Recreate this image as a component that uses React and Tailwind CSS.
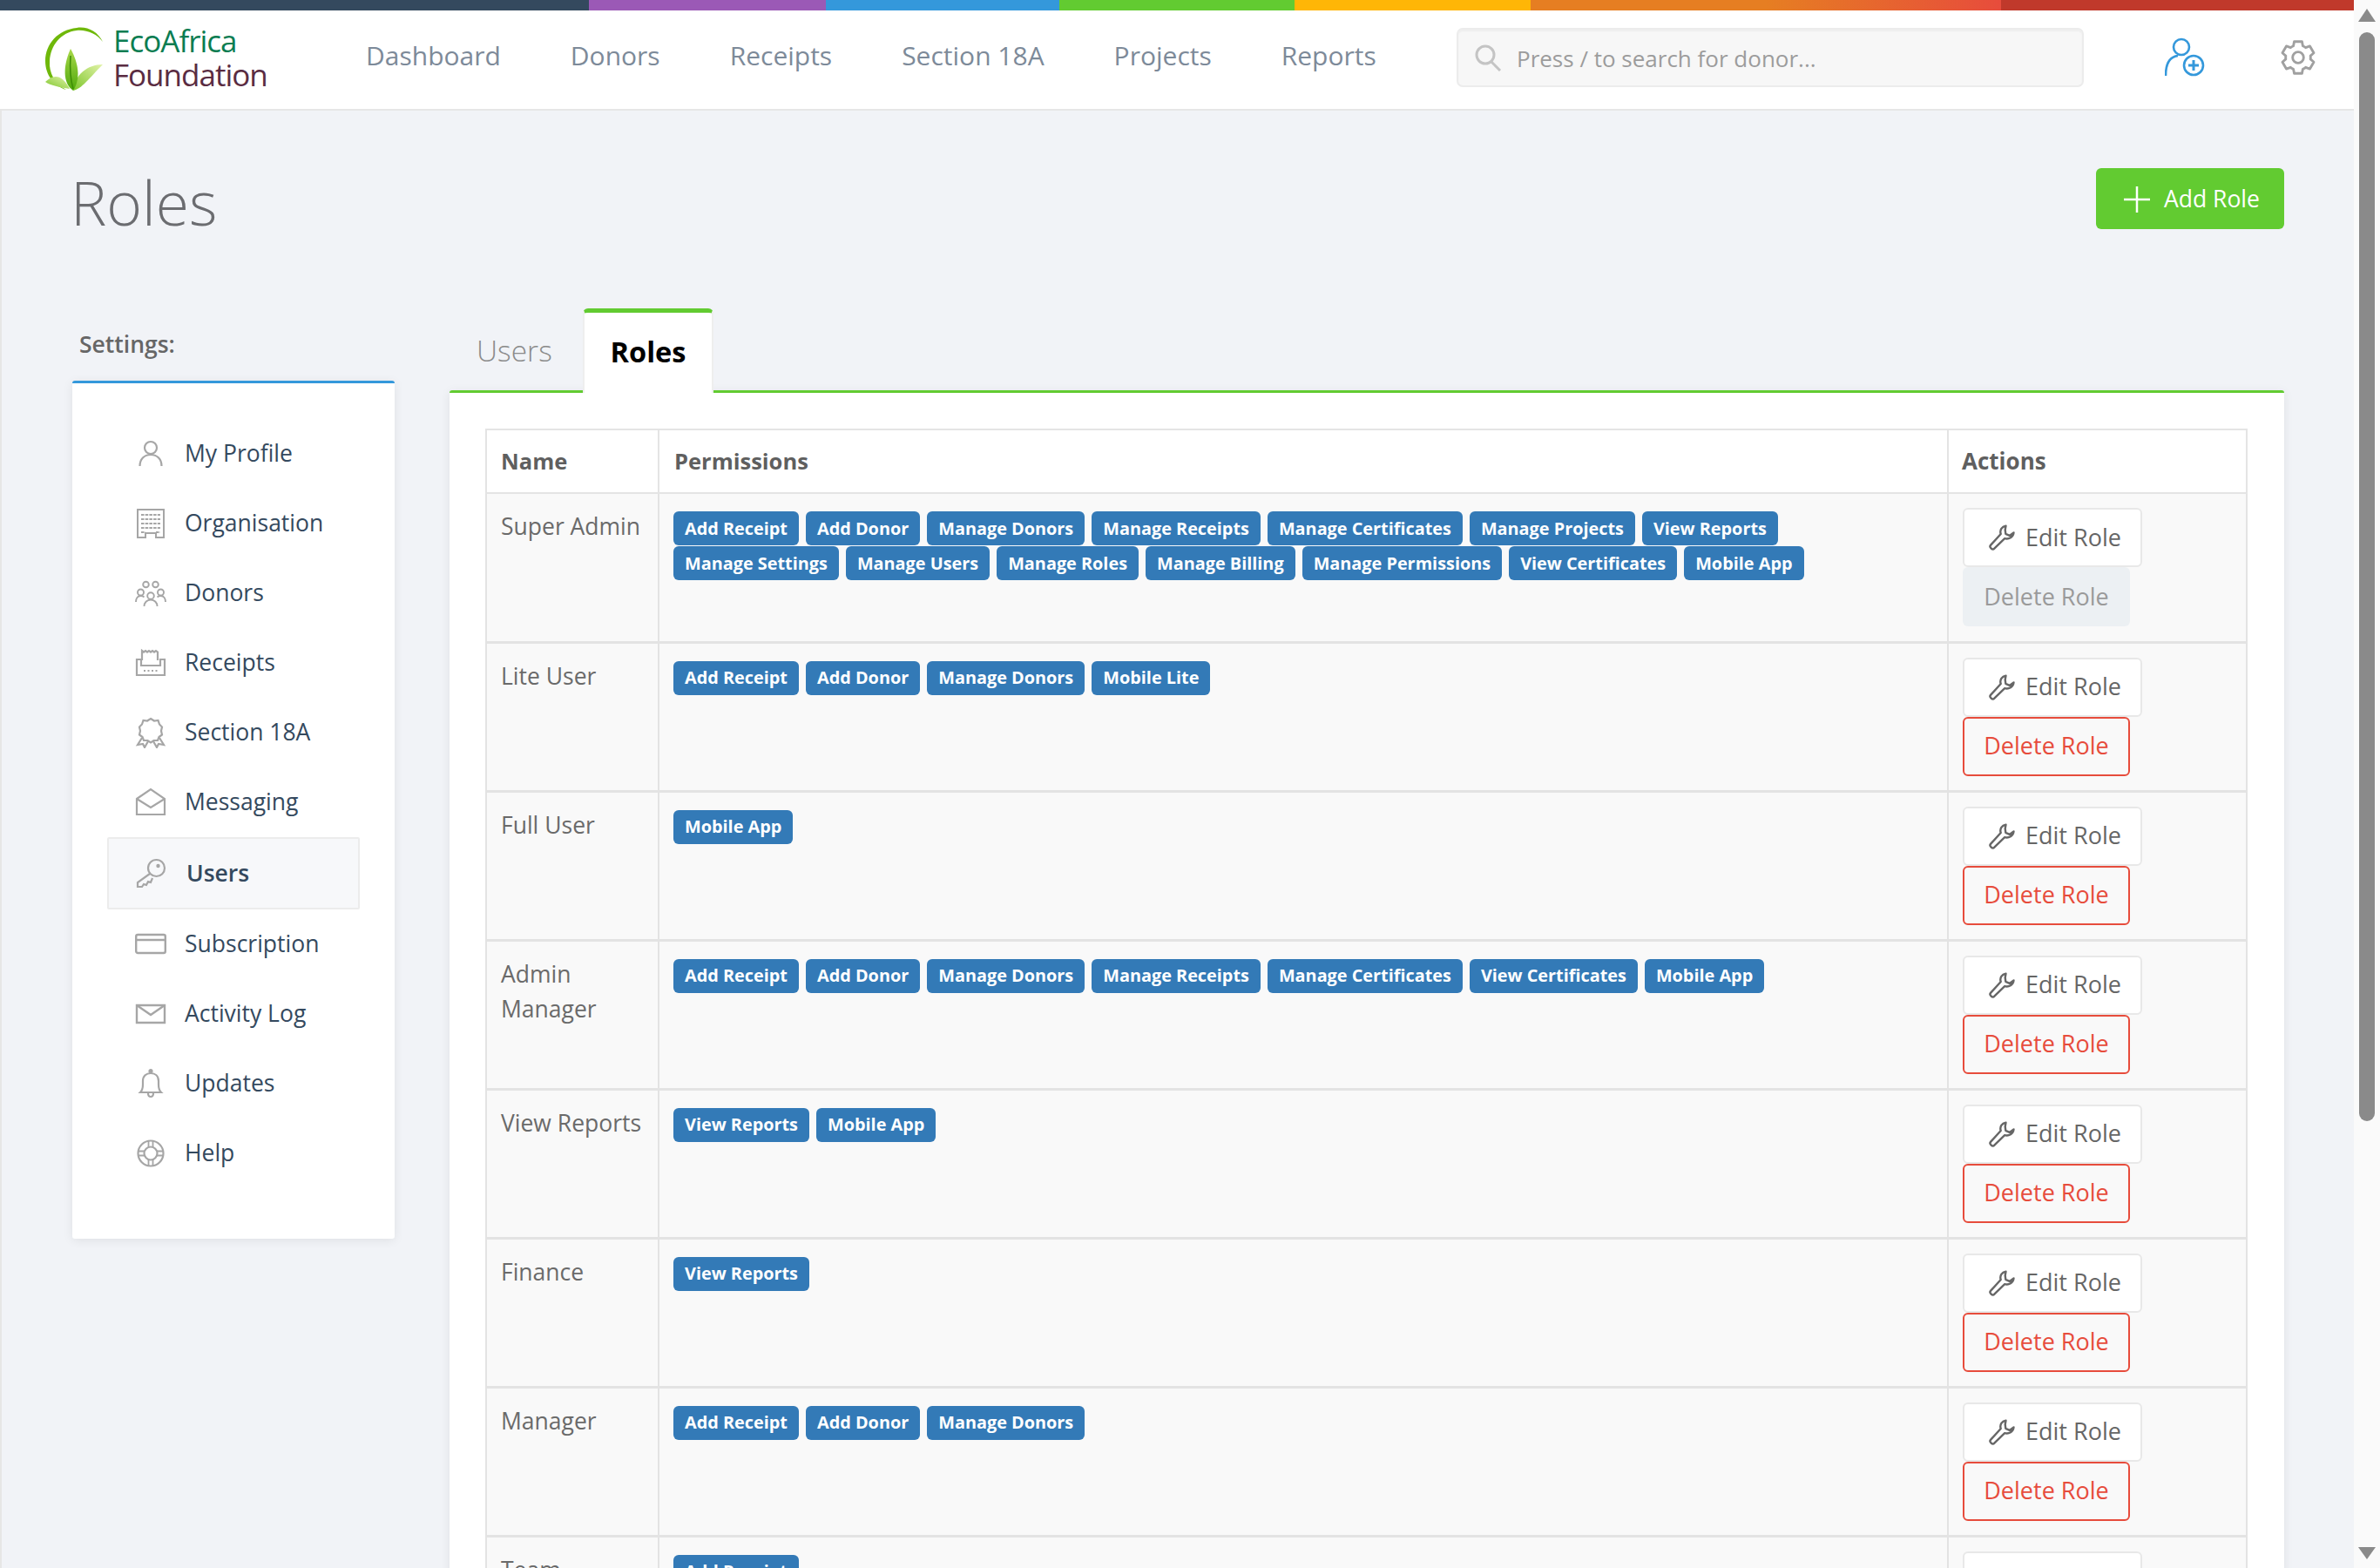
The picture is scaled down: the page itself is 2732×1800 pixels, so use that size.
import React from "react";

const FONT = "font-['Open_Sans','Noto_Sans',sans-serif]";

function I({ children, sw = 2 }) {
  return (
    <svg viewBox="0 0 36 36" className="w-9 h-9 shrink-0" fill="none" stroke="#a6a6a6" strokeWidth={sw} strokeLinejoin="miter">
      {children}
    </svg>
  );
}

const icons = {
  profile: (
    <I sw={2.2}>
      <circle cx="18" cy="11" r="7" />
      <path d="M5.500 32c0-8 5-13 12.500-13s12.500 5 12.500 13" />
    </I>
  ),
  org: (
    <I>
      <path d="M3 34V2h30v32h-9v-5H12v5z" />
      <path d="M7 8h22M7 13h22M7 18h22M7 23h22M7 28h5M24 28h5" strokeDasharray="3.500 1.200" strokeWidth="1.800" />
    </I>
  ),
  donors: (
    <I sw={1.9}>
      <circle cx="12.500" cy="8" r="3.300" />
      <circle cx="23.500" cy="8" r="3.300" />
      <circle cx="6.500" cy="17" r="3.500" />
      <circle cx="29.500" cy="17" r="3.500" />
      <circle cx="18" cy="21" r="3.800" />
      <path d="M1 28c0-4 2-7 5.500-7 1.500 0 3 .5 4 1.500M35 28c0-4-2-7-5.500-7-1.500 0-3 .5-4 1.500M10.500 33c0-4 3-7.500 7.500-7.500s7.500 3.500 7.500 7.500" />
    </I>
  ),
  receipts: (
    <I sw={2.2}>
      <path d="M8 15V4l2 1.500 2-1.500 2 1.500 2-1.500 2 1.500 2-1.500 2 1.500 2-1.500 2 1.500V15" />
      <path d="M2 14h5v7h22v-7h5v18H2z" />
      <path d="M10 27h16" strokeDasharray="2 2.500" />
    </I>
  ),
  award: (
    <I sw={2.2}>
      <path d="M18 2l4 2.500 4.500-.5 1.500 4.500 3 3-1 4.500 1 4.500-3.500 2.500-1.500 4-4.500 0-3.500 2.500-3.500-2.500-4.500 0-1.500-4-3.500-2.500 1-4.500-1-4.500 3-3L9.500 4l4.500.5z" />
      <path d="M8 24l-5 8 6-1 2 4 4-7M28 24l5 8-6-1-2 4-4-7" />
    </I>
  ),
  messaging: (
    <I sw={2.2}>
      <path d="M2 14L18 3l16 11v18H2z" />
      <path d="M2 14l16 10 16-10" />
    </I>
  ),
  users: (
    <I sw={2.2}>
      <circle cx="24.500" cy="11.500" r="9.500" />
      <circle cx="26.500" cy="9" r="2.200" fill="#a6a6a6" stroke="none" />
      <path d="M17 18L3 28v5h5l2-3 3 1 2-4 3 1 2-5" />
    </I>
  ),
  subscription: (
    <I sw={2.4}>
      <rect x="1.200" y="7" width="33.600" height="21" rx="2" />
      <path d="M1 13h34" />
    </I>
  ),
  activity: (
    <I sw={2.4}>
      <path d="M2 8h32v20H2z" />
      <path d="M2 8l16 11L34 8" />
    </I>
  ),
  updates: (
    <I sw={2.2}>
      <path d="M6 28c2-2 3-5 3-9v-4c0-6 4-9 9-9s9 3 9 9v4c0 4 1 7 3 9z" />
      <circle cx="18" cy="3.500" r="1.500" fill="#a6a6a6" />
      <path d="M15 29c0 3 1.500 4 3 4s3-1 3-4" />
    </I>
  ),
  help: (
    <I sw={2.2}>
      <circle cx="18" cy="18" r="14.500" />
      <circle cx="18" cy="18" r="7.500" />
      <path d="M15.500 4v7M20.500 4v7M15.500 25v7M20.500 25v7M4 15.500h7M4 20.500h7M25 15.500h7M25 20.500h7" strokeWidth="1.800" />
    </I>
  ),
};

const side = [
  ["My Profile", "profile"],
  ["Organisation", "org"],
  ["Donors", "donors"],
  ["Receipts", "receipts"],
  ["Section 18A", "award"],
  ["Messaging", "messaging"],
  ["Users", "users", true],
  ["Subscription", "subscription"],
  ["Activity Log", "activity"],
  ["Updates", "updates"],
  ["Help", "help"],
];

const roles = [
  ["Super Admin", ["Add Receipt", "Add Donor", "Manage Donors", "Manage Receipts", "Manage Certificates", "Manage Projects", "View Reports", "Manage Settings", "Manage Users", "Manage Roles", "Manage Billing", "Manage Permissions", "View Certificates", "Mobile App"], true],
  ["Lite User", ["Add Receipt", "Add Donor", "Manage Donors", "Mobile Lite"]],
  ["Full User", ["Mobile App"]],
  ["Admin Manager", ["Add Receipt", "Add Donor", "Manage Donors", "Manage Receipts", "Manage Certificates", "View Certificates", "Mobile App"]],
  ["View Reports", ["View Reports", "Mobile App"]],
  ["Finance", ["View Reports"]],
  ["Manager", ["Add Receipt", "Add Donor", "Manage Donors"]],
  ["Team", ["Add Receipt"]],
];

function Wrench() {
  return (
    <svg viewBox="0 0 30 30" className="w-[30px] h-[30px] shrink-0" fill="none" stroke="#666" strokeWidth="2.400" strokeLinejoin="round">
      <path d="M19.500 1.800c-4.500.6-7.300 4.800-5.800 9.200L2.200 23.600c-1 1.100-1 2.400 0 3.400l.8.800c1 1 2.300 1 3.300-.1L18.200 16.200c4.900 1.400 9.600-1.600 10.300-6.700l-4.800 3.400-4.400-2-.6-4.700z" />
    </svg>
  );
}

function Logo() {
  return (
    <svg viewBox="0 0 72 76" className="w-[72px] h-[76px] shrink-0">
      <defs>
        <linearGradient id="lf" x1="0" y1="0" x2="0" y2="1">
          <stop offset="0" stopColor="#a9d94a" />
          <stop offset="1" stopColor="#4fa80c" />
        </linearGradient>
        <linearGradient id="lf2" x1="1" y1="0" x2="0" y2="1">
          <stop offset="0" stopColor="#e2f3a8" />
          <stop offset="1" stopColor="#7cc52a" />
        </linearGradient>
      </defs>
      <path d="M68 18C62 6 50 0 38 2 17 4 2 20 2 40c0 16 10 29 24 33C13 66 6 54 7 40 8 22 20 7 38 5c12-1 23 4 30 13z" fill="#6fb80a" />
      <path d="M30 72C18 70 8 68 2 64c10-10 20-8 28 8z" fill="url(#lf2)" />
      <path d="M34 74C44 72 52 60 68 44 50 44 36 56 34 74z" fill="url(#lf2)" />
      <path d="M34 74C22 66 22 46 31 26c9 16 12 34 3 48z" fill="url(#lf)" />
      <path d="M31 34c-1 14 0 28 3 38" stroke="#3d8c06" strokeWidth="1.500" fill="none" />
    </svg>
  );
}

function Tag({ children }) {
  return (
    <span className="h-[39px] px-[13px] flex items-center bg-[#337ab7] rounded-[6px] text-white font-bold text-[19.85px] leading-none whitespace-nowrap">
      {children}
    </span>
  );
}

export default function App() {
  return (
    <div className={`w-[2732px] h-[1800px] flex overflow-hidden bg-[#fafafa] ${FONT}`}>
      <div className="w-[2702px] h-full flex flex-col shrink-0">
        <div className="flex h-3 shrink-0">
          <div className="w-[676px] bg-[#34495e]" />
          <div className="w-[272px] bg-[#9b59b6]" />
          <div className="w-[268px] bg-[#3498db]" />
          <div className="w-[270px] bg-[#62cb31]" />
          <div className="w-[271px] bg-[#ffb606]" />
          <div className="w-[540px] bg-[linear-gradient(90deg,#e67e22_0%,#e67e22_50%,#e74c3c_100%)]" />
          <div className="w-[405px] bg-[#c0392b]" />
        </div>

        <header className="h-[115px] shrink-0 bg-white border-b-2 border-[#e6e6e6] flex items-start">
          <div className="w-[420px] shrink-0 pl-[50px] pt-[18px] flex gap-[8px]">
            <Logo />
            <div className="flex flex-col text-[35px] leading-[39px] font-normal tracking-[-1px] -mt-[3px]">
              <span className="text-[#0b7d52]">EcoAfrica</span>
              <span className="text-[#5a2c42]">Foundation</span>
            </div>
          </div>
          <nav className="w-[1252px] shrink-0 flex items-center gap-[80px] pt-[32px] text-[#7d8a99] text-[30px] leading-[40px]">
            {["Dashboard", "Donors", "Receipts", "Section 18A", "Projects", "Reports"].map((n) => (
              <span key={n}>{n}</span>
            ))}
          </nav>
          <div className="mt-[20px] w-[720px] h-[68px] shrink-0 bg-[#f7f7f7] border-2 border-[#ececec] rounded-[7px] flex items-center pl-[18px] gap-[17px] shadow-[inset_0_2px_2px_rgba(0,0,0,0.04)]">
            <svg viewBox="0 0 32 32" className="w-8 h-8 shrink-0" fill="none" stroke="#c4c4c4" strokeWidth="3">
              <circle cx="13" cy="13" r="10" />
              <path d="M20 21l10 10" />
            </svg>
            <span className="text-[#9c9c9c] text-[26px] pt-[2px]">Press / to search for donor...</span>
          </div>
          <svg viewBox="0 0 46 46" className="w-[46px] h-[46px] ml-[93px] mt-[31px] shrink-0" fill="none" stroke="#3498db" strokeWidth="2.600">
            <circle cx="19" cy="11" r="9" />
            <path d="M1 44c0-14 5-22 14-23" />
            <circle cx="33" cy="32" r="11" />
            <path d="M33 26v12M27 32h12" strokeWidth="3" />
          </svg>
          <svg viewBox="0 0 24 24" className="w-[46px] h-[46px] ml-[84px] mt-[31px] shrink-0" fill="none" stroke="#a0a0a0" strokeWidth="1.500" strokeLinejoin="round">
            <path d="M9.670 2.500l-.5 2.600c-.6.250-1.200.6-1.700 1L4.950 5.200 2.600 9.270l2 1.730a7 7 0 000 2l-2 1.730 2.350 4.070 2.520-.9c.5.400 1.100.75 1.700 1l.5 2.600h4.660l.5-2.600c.6-.25 1.200-.6 1.700-1l2.520.9 2.350-4.070-2-1.730a7 7 0 000-2l2-1.730-2.350-4.070-2.520.9c-.5-.4-1.100-.75-1.700-1l-.5-2.600z" />
            <circle cx="12" cy="12" r="3.300" />
          </svg>
        </header>

        <main className="flex-1 min-h-0 bg-[#f1f3f7] border-l-2 border-[#e6e6e6] pl-[81px] pr-[80px]">
          <div className="flex justify-between pt-[66px] mb-[87px]">
            <h1 className="text-[#6b6c70] text-[69.5px] leading-[70px] font-light mt-[4px] -ml-[2px]">Roles</h1>
            <button className="w-[216px] h-[70px] bg-[#62cb31] rounded-[6px] flex items-center pl-[31px] gap-[15px] text-white text-[26.5px] pt-[1px]">
              <svg viewBox="0 0 32 32" className="w-8 h-8 shrink-0" stroke="#fff" strokeWidth="2.500">
                <path d="M16 1v30M1 16h30" />
              </svg>
              Add Role
            </button>
          </div>

          <div className="flex gap-[63px] items-start">
            <aside className="w-[370px] shrink-0">
              <div className="h-[83px] pl-[8px] pt-[21px] text-[#666] font-semibold text-[26.5px] leading-[40px]">Settings:</div>
              <div className="bg-white border-t-[3px] border-[#3498db] rounded-[3px] shadow-[0_2px_12px_rgba(0,0,0,0.08)] px-[40px] pt-[41px] pb-[58px]">
                {side.map(([label, icon, active]) => (
                  <div
                    key={label}
                    className={
                      active
                        ? "h-[83px] flex items-center gap-[23px] pl-[30px] bg-[#f7f8fa] border-2 border-[#ececec] rounded-[2px] text-[#34495e] font-semibold text-[26.5px]"
                        : "h-[80px] flex items-center gap-[21px] pl-[32px] text-[#34495e] text-[26.5px]"
                    }
                  >
                    {icons[icon]}
                    <span>{label}</span>
                  </div>
                ))}
              </div>
            </aside>

            <section className="flex-1 min-w-0">
              <div className="h-[94px] flex items-end">
                <div className="w-[153px] h-[94px] pl-[31px] pt-[26px] text-[#8b8b8b] text-[33.5px] leading-[44px] font-light">Users</div>
                <div className="relative z-10 -mb-[3px] w-[150px] h-[97px] bg-white border-t-[5px] border-x-2 border-t-[#62cb31] border-x-[#eeeeee] rounded-t-[6px] flex justify-center pt-[23px] text-black font-bold text-[32.5px] leading-[44px]">
                  Roles
                </div>
              </div>
              <div className="bg-white border-t-[3px] border-[#62cb31] rounded-t-[3px] shadow-[0_2px_12px_rgba(0,0,0,0.08)] pl-[41px] pr-[42px] pt-[41px] h-[1400px]">
                <table className="w-[2021px] table-fixed border-collapse bg-[#f9f9f9] text-[#666]">
                  <colgroup>
                    <col className="w-[198px]" />
                    <col className="w-[1480px]" />
                    <col className="w-[343px]" />
                  </colgroup>
                  <thead>
                    <tr className="h-[73px] bg-white text-[#5f5f5f]">
                      <th className="border-2 border-[#e4e4e4] pl-[16px] text-left font-bold text-[25.500px]">Name</th>
                      <th className="border-2 border-[#e4e4e4] px-[17px] text-left font-bold text-[25.500px]">Permissions</th>
                      <th className="border-2 border-[#e4e4e4] px-[15px] text-left font-bold text-[26px]">Actions</th>
                    </tr>
                  </thead>
                  <tbody>
                    {roles.map(([name, tags, locked]) => (
                      <tr key={name} className="h-[171px]">
                        <td className="align-top border-2 border-b-[3px] border-[#e3e3e3] pl-[16px] pr-[10px] pt-[17px] text-[26.500px] leading-[40px] font-normal text-[#6a6a6a]">
                          {name}
                        </td>
                        <td className="align-top border-2 border-b-[3px] border-[#e3e3e3] pl-[16px] pr-[16px] pt-[20px]">
                          <div className="flex flex-wrap gap-x-[8px] gap-y-[1px]">
                            {tags.map((t) => (
                              <Tag key={t}>{t}</Tag>
                            ))}
                          </div>
                        </td>
                        <td className="align-top border-2 border-b-[3px] border-[#e3e3e3] pl-[16px] pt-[16px]">
                          <button className="w-[206px] h-[68px] bg-white border-2 border-[#e8e8e8] rounded-[6px] flex items-center pl-[28px] gap-[12px] text-[27px] text-[#666]">
                            <Wrench />
                            Edit Role
                          </button>
                          {locked ? (
                            <button className="w-[192px] h-[68px] bg-[#ecf0f3] rounded-[6px] flex items-center justify-center text-[27px] text-[#9a9a9a]">
                              Delete Role
                            </button>
                          ) : (
                            <button className="w-[192px] h-[68px] border-2 border-[#e74c3c] rounded-[6px] flex items-center justify-center text-[27px] text-[#e74c3c]">
                              Delete Role
                            </button>
                          )}
                        </td>
                      </tr>
                    ))}
                  </tbody>
                </table>
              </div>
            </section>
          </div>
        </main>
      </div>

      <div className="w-[30px] h-full shrink-0 flex flex-col items-center pt-[10px] pb-[10px]">
        <div className="w-0 h-0 border-x-[10px] border-x-transparent border-b-[15px] border-b-[#8a8a8a] shrink-0" />
        <div className="w-[18px] h-[1250px] mt-[12px] bg-[#8a8a8a] rounded-[9px] shrink-0" />
        <div className="flex-1" />
        <div className="w-0 h-0 border-x-[10px] border-x-transparent border-t-[14px] border-t-[#8a8a8a] shrink-0" />
      </div>
    </div>
  );
}
